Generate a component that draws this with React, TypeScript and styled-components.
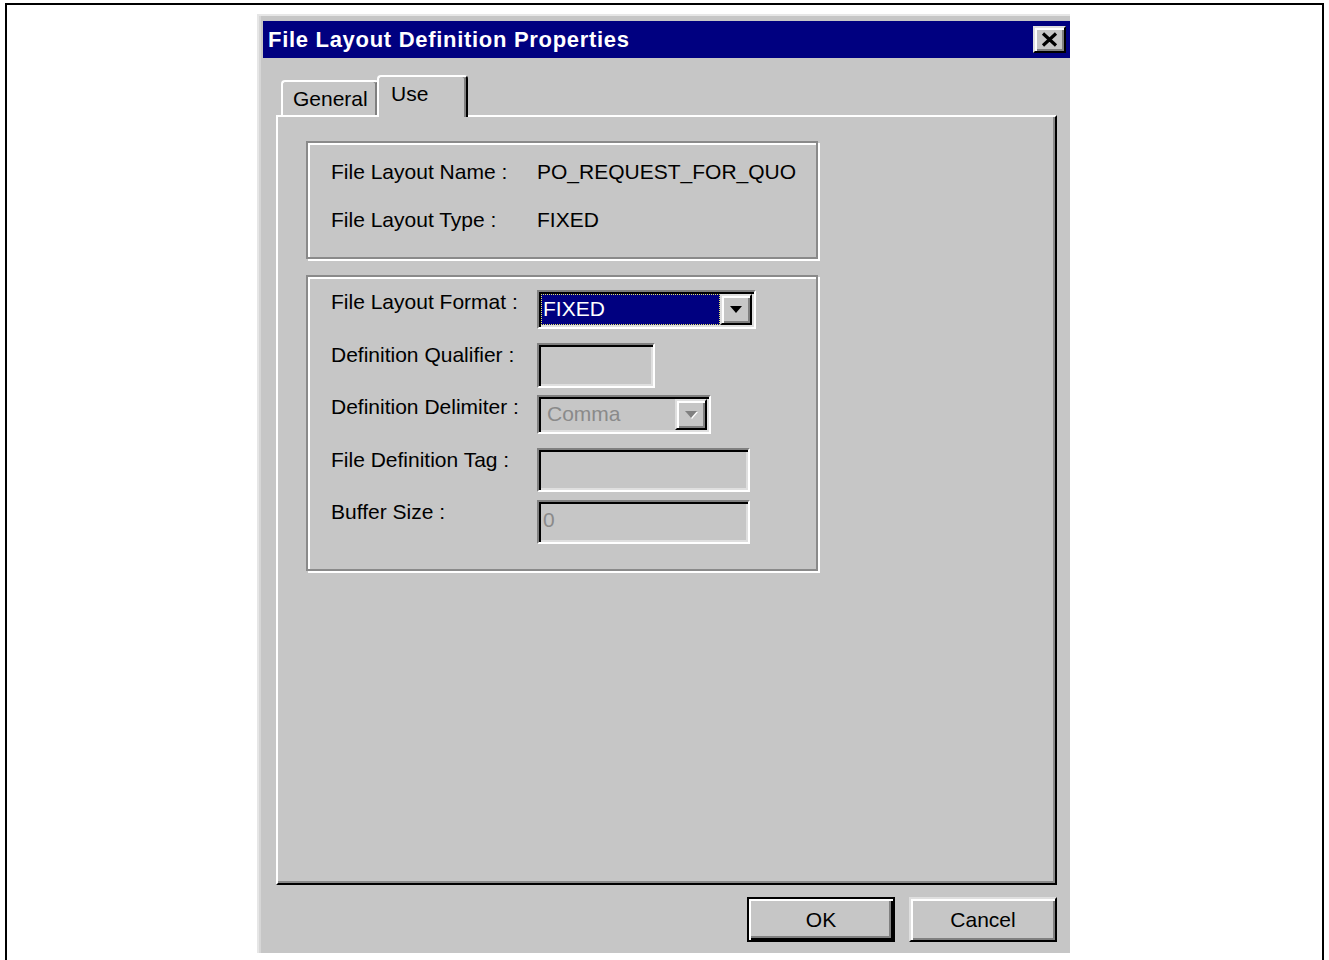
import styled, { createGlobalStyle, css } from 'styled-components'

const GlobalStyle = createGlobalStyle`
  html, body {
    margin: 0;
    background: #fff;
    overflow: hidden;
  }
  body {
    font-family: "Liberation Sans", Arial, sans-serif;
  }
  * {
    box-sizing: border-box;
  }
`

const FACE = '#c6c6c6'
const SHADOW = '#808080'
const LIGHT = '#dfdfdf'

const raised = css`
  border: 2px solid;
  border-color: ${LIGHT} #000 #000 ${LIGHT};
  box-shadow: inset 2px 2px 0 #fff, inset -2px -2px 0 ${SHADOW};
`

const sunken = css`
  border: 2px solid;
  border-color: ${SHADOW} #fff #fff ${SHADOW};
  box-shadow: inset 2px 2px 0 #000, inset -2px -2px 0 ${LIGHT};
  padding: 2px;
`

const Frame = styled.div`
  margin: 3px 0 0 5px;
  width: 1319px;
  height: 980px;
  border: 2px solid #000;
  border-bottom: none;
  padding: 9px 0 0 250px;
`

const Dialog = styled.div`
  width: 813px;
  height: 939px;
  background: ${FACE};
  border-top: 2px solid #e6e6e6;
  border-left: 2px solid #e6e6e6;
  box-shadow: inset 2px 0 0 #d6d6d6;
  display: flex;
  flex-direction: column;
`

const TitleBar = styled.div`
  height: 37px;
  margin: 5px 0 0 4px;
  background: #000080;
  display: flex;
  align-items: center;
  justify-content: space-between;
  padding: 0 4px 0 5px;
`

const Title = styled.span`
  color: #fff;
  font-weight: bold;
  font-size: 22px;
  letter-spacing: 0.7px;
  padding-top: 1px;
`

const CloseButton = styled.div`
  ${raised};
  width: 33px;
  height: 27px;
  background: ${FACE};
  display: flex;
  align-items: center;
  justify-content: center;
`

const Body = styled.div`
  flex: 1;
  display: flex;
  flex-direction: column;
  padding: 17px 13px 11px 17px;
`

const TabStrip = styled.div`
  height: 40px;
  display: flex;
  align-items: flex-end;
  padding-left: 5px;
  position: relative;
  z-index: 1;
`

const Tab = styled.div<{ $active?: boolean; $width: number }>`
  width: ${(p) => p.$width}px;
  height: ${(p) => (p.$active ? 42 : 35)}px;
  margin-bottom: ${(p) => (p.$active ? -2 : 0)}px;
  margin-left: ${(p) => (p.$active ? -2 : 0)}px;
  position: relative;
  z-index: ${(p) => (p.$active ? 2 : 1)};
  background: ${FACE};
  border: 2px solid;
  border-bottom: none;
  border-color: #fff #000 transparent #fff;
  border-radius: 4px 4px 0 0;
  box-shadow: inset -2px 0 0 ${SHADOW};
  display: flex;
  align-items: center;
  padding: 0 0 ${(p) => (p.$active ? 6 : 0)}px ${(p) => (p.$active ? 12 : 10)}px;
  font-size: 21px;
  color: #000;
`

const Panel = styled.div`
  flex: 1;
  border: 2px solid;
  border-color: #fff #000 #000 #fff;
  box-shadow: inset -2px -2px 0 #8a8a8a;
  padding: 24px 0 0 28px;
  display: flex;
  flex-direction: column;
  align-items: flex-start;
  gap: 16px;
`

const GroupBox = styled.div<{ $rows: 'info' | 'form' }>`
  width: 512px;
  border: 2px solid #8a8a8a;
  box-shadow: inset 2px 2px 0 #fff, 2px 2px 0 #fff;
  display: grid;
  grid-template-columns: 206px 1fr;
  font-size: 21px;
  color: #000;
  ${(p) =>
    p.$rows === 'info'
      ? css`
          padding: 5px 0 13px 23px;
          grid-auto-rows: 48px;
          align-items: center;
        `
      : css`
          padding: 13px 0 16px 23px;
          grid-auto-rows: 52.5px;
          align-items: start;
        `}
`

const Label = styled.span`
  line-height: 24px;
  white-space: nowrap;
`

const Value = styled.span`
  line-height: 24px;
  white-space: nowrap;
`

const Combo = styled.div<{ $width: number }>`
  ${sunken};
  width: ${(p) => p.$width}px;
  height: 39px;
  display: flex;
  background: ${FACE};
`

const ComboField = styled.div<{ $selected?: boolean; $disabled?: boolean }>`
  flex: 1;
  display: flex;
  align-items: center;
  padding: 0 0 1px ${(p) => (p.$disabled ? 6 : 2)}px;
  font-size: 21px;
  color: ${(p) => (p.$disabled ? '#8a8a8a' : '#fff')};
  ${(p) =>
    p.$selected &&
    css`
      background: #000080;
      outline: 1px dotted #e6e66a;
      outline-offset: -1px;
    `}
`

const DropButton = styled.div<{ $disabled?: boolean }>`
  ${raised};
  width: 32px;
  background: ${FACE};
  display: flex;
  align-items: center;
  justify-content: center;

  &::after {
    content: '';
    border-left: 6px solid transparent;
    border-right: 6px solid transparent;
    border-top: 7px solid ${(p) => (p.$disabled ? SHADOW : '#000')};
    ${(p) => p.$disabled && 'filter: drop-shadow(1px 1px 0 #fff);'}
  }
`

const TextBox = styled.div<{ $width: number; $height: number }>`
  ${sunken};
  width: ${(p) => p.$width}px;
  height: ${(p) => p.$height}px;
  background: ${FACE};
  display: flex;
  align-items: center;
  padding: 0 0 5px 4px;
  font-size: 21px;
  color: #8a8a8a;
`

const ButtonRow = styled.div`
  display: flex;
  justify-content: flex-end;
  gap: 14px;
  margin-top: 12px;
`

const PushButton = styled.div<{ $default?: boolean }>`
  width: 148px;
  height: 45px;
  background: ${FACE};
  display: flex;
  align-items: center;
  justify-content: center;
  font-size: 21px;
  color: #000;
  ${(p) =>
    p.$default
      ? css`
          border: 2px solid #000;
          box-shadow: inset 2px 2px 0 #fff, inset -2px -2px 0 #000,
            inset -4px -4px 0 ${SHADOW};
        `
      : raised}
`

const CloseIcon = () => (
  <svg width="17" height="15" viewBox="0 0 17 15">
    <path d="M2 1.5 L15 13.5 M15 1.5 L2 13.5" stroke="#000" strokeWidth="3.2" />
  </svg>
)

const App = () => (
  <>
    <GlobalStyle />
    <Frame>
      <Dialog>
        <TitleBar>
          <Title>File Layout Definition Properties</Title>
          <CloseButton>
            <CloseIcon />
          </CloseButton>
        </TitleBar>
        <Body>
          <TabStrip>
            <Tab $width={98}>General</Tab>
            <Tab $width={91} $active>
              Use
            </Tab>
          </TabStrip>
          <Panel>
            <GroupBox $rows="info">
              <Label>File Layout Name :</Label>
              <Value>PO_REQUEST_FOR_QUO</Value>
              <Label>File Layout Type :</Label>
              <Value>FIXED</Value>
            </GroupBox>
            <GroupBox $rows="form">
              <Label>File Layout Format :</Label>
              <Combo $width={219}>
                <ComboField $selected>FIXED</ComboField>
                <DropButton />
              </Combo>
              <Label>Definition Qualifier :</Label>
              <TextBox $width={118} $height={45} />
              <Label>Definition Delimiter :</Label>
              <Combo $width={174}>
                <ComboField $disabled>Comma</ComboField>
                <DropButton $disabled />
              </Combo>
              <Label>File Definition Tag :</Label>
              <TextBox $width={213} $height={44} />
              <Label>Buffer Size :</Label>
              <TextBox $width={213} $height={44}>
                0
              </TextBox>
            </GroupBox>
          </Panel>
          <ButtonRow>
            <PushButton $default>OK</PushButton>
            <PushButton>Cancel</PushButton>
          </ButtonRow>
        </Body>
      </Dialog>
    </Frame>
  </>
)

export default App
